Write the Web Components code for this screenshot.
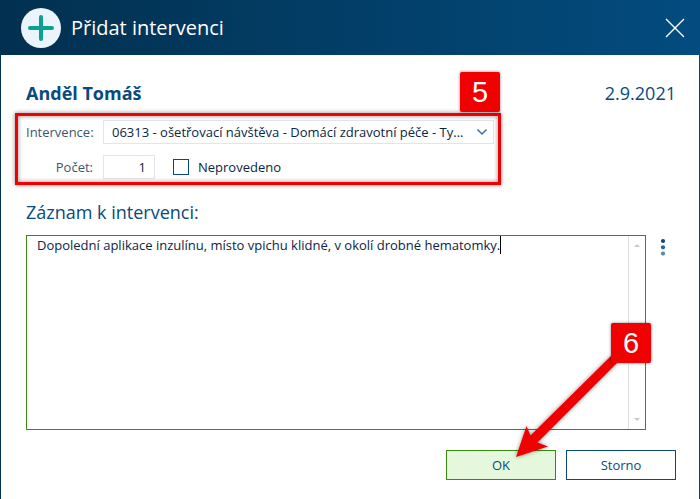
<!DOCTYPE html>
<html lang="cs">
<head>
<meta charset="utf-8">
<meta name="viewport" content="width=device-width, initial-scale=1">
<title>Přidat intervenci</title>
<style>
  html, body { margin: 0; }
  body { font: 13px/18px "Open Sans", "Noto Sans", sans-serif; color: #0b2545; background: #fff; }
</style>
</head>
<body>
<app-dialog>
  <dialog-header slot="header">Přidat intervenci</dialog-header>
  <patient-bar><span slot="name">Anděl Tomáš</span><span slot="date">2.9.2021</span></patient-bar>
  <intervention-fields><step-marker slot="marker">5</step-marker></intervention-fields>
  <record-editor>Záznam k intervenci:</record-editor>
  <dialog-actions><step-marker slot="marker">6</step-marker></dialog-actions>
</app-dialog>

<script>
const define = (name, html) => {
  const template = document.createElement('template');
  template.innerHTML = html;
  customElements.define(name, class extends HTMLElement {
    constructor() {
      super();
      this.attachShadow({ mode: 'open' }).append(template.content.cloneNode(true));
    }
  });
};

define('app-dialog', `
  <style>
    :host { display: flex; flex-direction: column; box-sizing: border-box; min-height: 100vh;
      background: linear-gradient(90deg, #02304f, #034c7f); padding: 0 1px; }
    main { flex: 1; display: flex; flex-direction: column; background: #fff; padding: 24px 23px 19px 25px; }
  </style>
  <slot name="header"></slot>
  <main><slot></slot></main>`);

define('dialog-header', `
  <style>
    :host { display: flex; align-items: center; height: 55px; padding: 0 13px 0 20px; gap: 10px; color: #fff; }
    h1 { flex: 1; margin: 0; font-size: 20px; line-height: 26px; font-weight: 400; }
    svg { display: block; }
    button { border: 0; padding: 0; background: none; color: inherit; }
  </style>
  <svg width="40" height="40" viewBox="0 0 40 40" aria-hidden="true">
    <circle cx="20" cy="20" r="20" fill="#e9f4fb"/>
    <path d="M20 9v22M9 20h22" stroke="#0ba090" stroke-width="4" stroke-linecap="round"/>
  </svg>
  <h1><slot></slot></h1>
  <button type="button" aria-label="Zavřít">
    <svg width="22" height="22" viewBox="0 0 22 22"><path d="M2 2l18 18M20 2L2 20" stroke="#fff" stroke-width="1.4"/></svg>
  </button>`);

define('patient-bar', `
  <style>
    :host { display: flex; justify-content: space-between; font-size: 18px; line-height: 28px; color: #084a80; }
    strong { font-weight: 700; }
  </style>
  <strong><slot name="name"></slot></strong><time datetime="2021-09-02"><slot name="date"></slot></time>`);

define('step-marker', `
  <style>
    :host { display: flex; align-items: center; justify-content: center; width: 40px; height: 40px; border-radius: 2px;
      background: #f00000; color: #fff; font: 29px/40px "Liberation Sans", Arial, sans-serif;
      box-shadow: 0 0 3px rgba(0,0,0,.5); }
  </style><slot></slot>`);

define('intervention-fields', `
  <style>
    :host { display: grid; grid-template-columns: 67px minmax(0, 391px); gap: 11px 10px; position: relative;
      align-self: flex-start; margin-top: 13px; width: min(468px, 100%); }
    .label { text-align: right; line-height: 24px; color: #3d5470; white-space: nowrap; }
    .field { position: relative; display: flex; align-items: center; }
    select, input { font: inherit; color: #0b2545; box-sizing: border-box; margin: 0; background: #fff; border: 1px solid #e3e4f0; border-radius: 0; outline: 0; }
    select { appearance: none; width: 100%; height: 24px; padding: 0 28px 0 8px; }
    .field > svg { position: absolute; right: 6px; top: 8px; pointer-events: none; }
    .count { width: 52px; height: 24px; text-align: right; padding: 0 8px; }
    .check { display: flex; align-items: center; gap: 9px; margin-left: 18px; }
    .check input { appearance: none; width: 16px; height: 16px; border-color: #084a80; }
    .frame { position: absolute; inset: -7px -7px -6px -11px; border: 3px solid #f00000; pointer-events: none;
      filter: drop-shadow(0 0 2px rgba(0,0,0,.5)); }
    ::slotted(step-marker) { position: absolute; right: -6px; top: -48px; }
  </style>
  <label class="label" for="kind">Intervence:</label>
  <div class="field">
    <select id="kind"><option>06313 - ošetřovací návštěva - Domácí zdravotní péče - Ty...</option></select>
    <svg width="12" height="8" viewBox="0 0 12 8" fill="none" stroke="#3f6f9c" stroke-width="1.5"><path d="M1.5 1.5L6 6l4.500-4.500"/></svg>
  </div>
  <label class="label" for="count">Počet:</label>
  <div class="field">
    <input class="count" id="count" type="text" inputmode="numeric" value="1">
    <label class="check"><input type="checkbox">Neprovedeno</label>
  </div>
  <div class="frame"></div>
  <slot name="marker"></slot>`);

define('record-editor', `
  <style>
    :host { flex: 1; display: flex; flex-direction: column; margin-top: 20px; }
    h2 { margin: 0 0 10px; font-size: 18px; line-height: 26px; font-weight: 400; color: #084a80; }
    .row { flex: 1; display: flex; gap: 12px; padding-right: 8px; }
    .box { position: relative; flex: 1; display: flex; border: 1px solid #3a8a10; min-height: 193px; }
    textarea { flex: 1; min-width: 0; box-sizing: border-box; border: 0; outline: 0; resize: none; padding: 0 8px 0 10px; margin: 0;
      font: inherit; color: #0b2545; background: none; overflow: hidden; caret-color: transparent; }
    .caret { position: absolute; left: 473px; top: 0; width: 1px; height: 18px; background: #000; }
    .scroll { width: 17px; box-sizing: border-box; border-left: 1px solid #dedede; display: flex; flex-direction: column;
      justify-content: space-between; align-items: center; padding: 8px 0; }
    .menu { align-self: flex-start; border: 0; background: none; padding: 3px 0 0; width: 10px; }
    svg { display: block; }
  </style>
  <h2 id="title"><slot></slot></h2>
  <div class="row">
    <div class="box">
      <textarea aria-label="Záznam k intervenci" spellcheck="false">Dopolední aplikace inzulínu, místo vpichu klidné, v okolí drobné hematomky.</textarea>
      <i class="caret"></i>
      <div class="scroll" aria-hidden="true">
        <svg width="6" height="3" viewBox="0 0 6 3"><path d="M0 3l3-3 3 3z" fill="#c8c8c8"/></svg>
        <svg width="6" height="3" viewBox="0 0 6 3"><path d="M0 0l3 3 3-3z" fill="#c8c8c8"/></svg>
      </div>
    </div>
    <div class="side"><button class="menu" type="button" aria-label="Další možnosti">
      <svg width="10" height="18" viewBox="0 0 10 18"><circle cx="5" cy="3" r="2.100" fill="#084a80"/><circle cx="5" cy="9.300" r="2.100" fill="#2b6592"/><circle cx="5" cy="15.500" r="2.100" fill="#5288ae"/></svg>
    </button></div>
  </div>`);

define('dialog-actions', `
  <style>
    :host { display: flex; justify-content: flex-end; gap: 10px; position: relative; margin-top: 20px; }
    button { width: 110px; height: 30px; box-sizing: border-box; font: inherit; color: #084a80; background: #fff; border: 1px solid #084a80; border-radius: 0; padding: 0; }
    .ok { background: #e5f8dc; border-color: #3a8a10; }
    .arrow { position: absolute; right: 58px; top: -96px; pointer-events: none; filter: drop-shadow(0 0 2px rgba(0,0,0,.45)); }
    ::slotted(step-marker) { position: absolute; right: 25px; top: -127px; }
  </style>
  <button class="ok" type="submit">OK</button>
  <button type="button">Storno</button>
  <svg class="arrow" width="104" height="104" viewBox="514 354 104 104" aria-hidden="true">
    <path fill="#f00000" d="M516 457L526.500 426L530.500 435.500L611 356L617 363L537.500 442.500L548 446.500Z"/>
  </svg>
  <slot name="marker"></slot>`);
</script>
</body>
</html>
